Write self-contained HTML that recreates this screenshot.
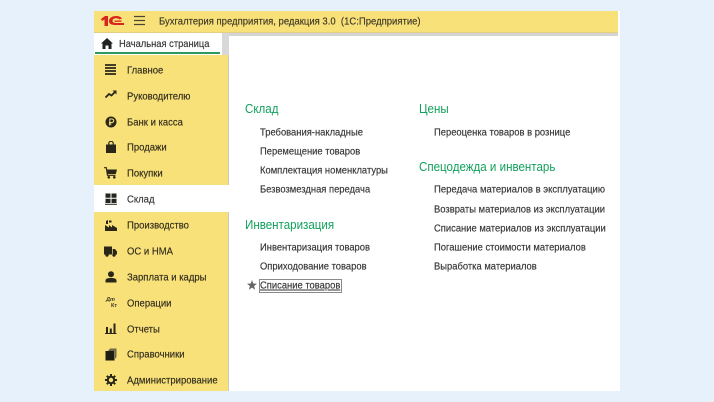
<!DOCTYPE html>
<html><head><meta charset="utf-8">
<style>
html,body{margin:0;padding:0;width:714px;height:402px;overflow:hidden;background:#e6f1fb}
body{position:relative;font-family:"Liberation Sans",sans-serif;color:#333}
div,svg{position:absolute}
.t{white-space:nowrap;filter:blur(.25px);transform-origin:0 50%;transform:translateY(.5px) scaleX(.905);-webkit-text-stroke:.15px currentColor}
.m{left:127px;font-size:10.5px;line-height:14px;height:14px;color:#2f2b1c}
.l{font-size:10.5px;line-height:14px;height:14px;color:#333;transform:translateY(.5px) scaleX(.895)}
.h{font-size:13px;line-height:16px;height:16px;color:#12a05c;transform:scaleX(.89);-webkit-text-stroke:0}
</style></head><body>
<div style="left:94px;top:11px;width:526px;height:380px;background:#fff"></div>
<div style="left:94px;top:11px;width:524px;height:21px;background:#f9e17a"></div>
<div style="left:94px;top:32px;width:524px;height:1px;background:#e3cf80"></div>
<div style="left:94px;top:33px;width:524px;height:3px;background:#d4d4d4"></div>
<div style="left:94px;top:33px;width:128px;height:23px;background:#fff"></div>
<div style="left:222px;top:33px;width:7px;height:23px;background:#d8d8d8"></div>
<div style="left:95px;top:52px;width:125px;height:2px;background:#2e9a62"></div>
<div style="left:94px;top:55px;width:134px;height:336px;background:#f9e17a"></div>
<div style="left:228px;top:55px;width:1px;height:336px;background:#c9c9c9"></div>
<div style="left:94px;top:185px;width:135px;height:27px;background:#fff"></div>

<svg style="left:101px;top:15px" width="24" height="13" viewBox="0 0 24 13"><path d="M0 4L4 1H7V11H3.500V4.500L1 6Z" fill="#d8251d"/><path d="M8 6C8 2.500 12 1 15 1C18 1 20 2 21 3.500L18.500 4.500C17.500 3.500 16.500 3.200 15 3.200C13 3.200 11.500 4.300 11.500 5.800C11.500 7.500 13 8 15 8H23V10H14.500C10.500 10 8 9 8 6Z" fill="#d8251d"/><path d="M13.500 5.500H20.500V6.800H13.500Z" fill="#d8251d"/></svg>
<svg style="left:134px;top:15px" width="12" height="12" viewBox="0 0 12 12"><path d="M0 1.500H11M0 5.500H11M0 9.500H11" stroke="#4a4634" stroke-width="1.200"/></svg>
<div class="t" style="left:159px;top:14px;font-size:10.5px;line-height:14px;color:#3c3725">Бухгалтерия предприятия, редакция 3.0&nbsp; (1С:Предприятие)</div>

<svg style="left:101px;top:38px" width="12" height="11" viewBox="0 0 12 11"><path d="M6 0L12 5.500H10.500V11H7.500V7.500H4.500V11H1.500V5.500H0Z" fill="#222"/></svg>
<div class="t" style="left:119px;top:37px;font-size:10.5px;line-height:14px;color:#333;transform:scaleX(.89)">Начальная страница</div>

<svg style="left:105px;top:64px" width="12" height="11" viewBox="0 0 12 11"><path d="M0 1H11M0 4H11M0 7H11M0 10H11" stroke="#2a2718" stroke-width="1.700"/></svg>
<svg style="left:105px;top:90px" width="12" height="9" viewBox="0 0 12 9"><path d="M.5 7.500L4 4L6.500 5.500L10 2" fill="none" stroke="#2a2718" stroke-width="1.800"/><path d="M7.500 .5H11.500V4.500Z" fill="#2a2718"/></svg>
<svg style="left:105px;top:116px" width="12" height="12" viewBox="0 0 12 12"><circle cx="6" cy="6" r="5.500" fill="#2a2718"/><path d="M4.800 9.500V3H7A1.700 1.700 0 0 1 7 6.500H4M3.800 8H6.500" fill="none" stroke="#f9e17a" stroke-width="1"/></svg>
<svg style="left:106px;top:141px" width="10" height="12" viewBox="0 0 10 12"><path d="M0 3.500H10V12H0Z" fill="#2a2718"/><path d="M2.800 5V2.500A2.200 2.200 0 0 1 7.200 2.500V5" fill="none" stroke="#2a2718" stroke-width="1.200"/></svg>
<svg style="left:104px;top:167px" width="13" height="12" viewBox="0 0 13 12"><path d="M0 .7H2.300L3.500 8.300H11.500" fill="none" stroke="#2a2718" stroke-width="1.200"/><path d="M3 2.500H13L11.800 7H3.500Z" fill="#2a2718"/><circle cx="4.800" cy="10.300" r="1.300" fill="#2a2718"/><circle cx="10.300" cy="10.300" r="1.300" fill="#2a2718"/></svg>
<svg style="left:105px;top:193px" width="12" height="12" viewBox="0 0 12 12"><path d="M.5 .5H5.500V4.800H.5ZM6.500 .5H11.500V4.800H6.500ZM.5 5.800H5.500V10H.5ZM6.500 5.800H11.500V10H6.500Z" fill="#25251f"/><path d="M0 11.300H12" stroke="#25251f"/></svg>
<svg style="left:105px;top:219px" width="12" height="12" viewBox="0 0 12 12"><path d="M0 12V6L4 8.500V6L7 8.500V6L12 9V12Z" fill="#2a2718"/><path d="M1 5V2L3 1V5Z" fill="#2a2718"/><path d="M4 1.500H6.500V3.500H4Z" fill="#2a2718"/></svg>
<svg style="left:104px;top:246px" width="13" height="11" viewBox="0 0 13 11"><path d="M0 .5H8V8.500H0ZM8.700 3H11L13 5.500V8.500H8.700Z" fill="#2a2718"/><circle cx="3" cy="9" r="1.700" fill="#2a2718"/><circle cx="10" cy="9" r="1.700" fill="#2a2718"/></svg>
<svg style="left:105px;top:271px" width="12" height="12" viewBox="0 0 12 12"><circle cx="6" cy="3.200" r="3" fill="#2a2718"/><path d="M.5 11.500V9.500C.5 7.500 3 7 6 7S11.500 7.500 11.500 9.500V11.500Z" fill="#2a2718"/></svg>
<div class="t" style="left:106px;top:297px;font-size:5.500px;line-height:6px;font-weight:bold;font-style:italic;color:#3a3728;transform:none;-webkit-text-stroke:0">Дт</div>
<div class="t" style="left:111px;top:303px;font-size:5.500px;line-height:6px;font-weight:bold;color:#3a3728;transform:none;-webkit-text-stroke:0">Кт</div>
<svg style="left:105px;top:323px" width="12" height="11" viewBox="0 0 12 11"><path d="M1 4H3V10H1ZM4.800 5.500H6.800V10H4.800ZM8.500 .5H10.500V10H8.500Z" fill="#2a2718"/><path d="M0 10.500H11.500" stroke="#2a2718"/></svg>
<svg style="left:105px;top:348px" width="12" height="13" viewBox="0 0 12 13"><path d="M3 3L5 0.500H11.500V9L10 11V3Z" fill="#6f6a4a"/><path d="M.5 3H9.500V12.500H.5Z" fill="#1f1d12"/></svg>
<svg style="left:105px;top:374px" width="12" height="12" viewBox="0 0 12 12"><circle cx="6" cy="6" r="3.200" fill="none" stroke="#2a2718" stroke-width="2"/><path d="M6 0V2.500M6 9.500V12M0 6H2.500M9.500 6H12M1.800 1.800L3.500 3.500M8.500 8.500L10.200 10.200M10.200 1.800L8.500 3.500M3.500 8.500L1.800 10.200" stroke="#2a2718" stroke-width="2"/></svg>

<div class="t m" style="top:63px">Главное</div>
<div class="t m" style="top:89px">Руководителю</div>
<div class="t m" style="top:115px">Банк и касса</div>
<div class="t m" style="top:140px">Продажи</div>
<div class="t m" style="top:166px">Покупки</div>
<div class="t m" style="top:192px;color:#333">Склад</div>
<div class="t m" style="top:218px">Производство</div>
<div class="t m" style="top:244px">ОС и НМА</div>
<div class="t m" style="top:270px">Зарплата и кадры</div>
<div class="t m" style="top:296px">Операции</div>
<div class="t m" style="top:322px">Отчеты</div>
<div class="t m" style="top:347px">Справочники</div>
<div class="t m" style="top:373px">Администрирование</div>

<div class="t h" style="left:245px;top:101px">Склад</div>
<div class="t l" style="left:260px;top:125px">Требования-накладные</div>
<div class="t l" style="left:260px;top:144px">Перемещение товаров</div>
<div class="t l" style="left:260px;top:163px">Комплектация номенклатуры</div>
<div class="t l" style="left:260px;top:182px">Безвозмездная передача</div>
<div class="t h" style="left:245px;top:217px">Инвентаризация</div>
<div class="t l" style="left:260px;top:240px">Инвентаризация товаров</div>
<div class="t l" style="left:260px;top:259px">Оприходование товаров</div>
<div style="left:259px;top:279px;width:81px;height:12px;border:1px solid #8a8a8a"></div>
<svg style="left:247px;top:280px" width="10" height="10" viewBox="0 0 10 10"><path d="M5 0L6.300 3.500L10 3.700L7.100 6L8.100 9.700L5 7.600L1.900 9.700L2.900 6L0 3.700L3.700 3.500Z" fill="#666"/></svg>
<div class="t l" style="left:260px;top:278px;text-decoration:underline">Списание товаров</div>

<div class="t h" style="left:419px;top:101px">Цены</div>
<div class="t l" style="left:434px;top:125px">Переоценка товаров в рознице</div>
<div class="t h" style="left:419px;top:159px">Спецодежда и инвентарь</div>
<div class="t l" style="left:434px;top:182px;transform:translateY(.5px) scaleX(.905)">Передача материалов в эксплуатацию</div>
<div class="t l" style="left:434px;top:202px">Возвраты материалов из эксплуатации</div>
<div class="t l" style="left:434px;top:221px">Списание материалов из эксплуатации</div>
<div class="t l" style="left:434px;top:240px">Погашение стоимости материалов</div>
<div class="t l" style="left:434px;top:259px">Выработка материалов</div>
</body></html>
